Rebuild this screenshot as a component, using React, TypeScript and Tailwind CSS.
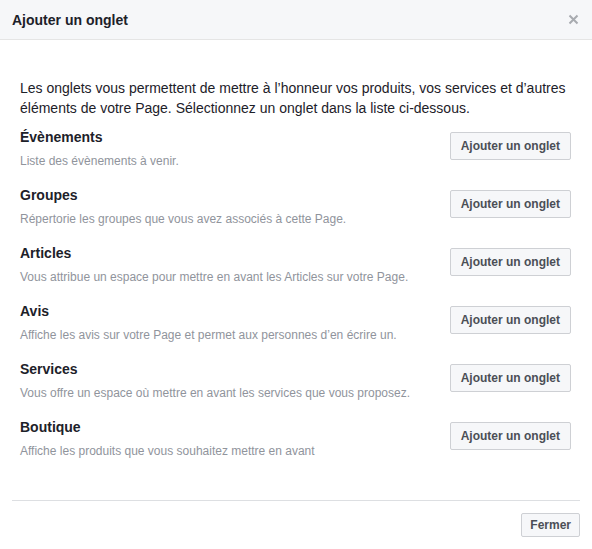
import React from 'react';

const tabs = [
    { title: 'Évènements', desc: 'Liste des évènements à venir.' },
    { title: 'Groupes', desc: 'Répertorie les groupes que vous avez associés à cette Page.' },
    { title: 'Articles', desc: 'Vous attribue un espace pour mettre en avant les Articles sur votre Page.' },
    { title: 'Avis', desc: 'Affiche les avis sur votre Page et permet aux personnes d’en écrire un.' },
    { title: 'Services', desc: 'Vous offre un espace où mettre en avant les services que vous proposez.' },
    { title: 'Boutique', desc: 'Affiche les produits que vous souhaitez mettre en avant' },
];

const App: React.FC = () => {
    return (
        <div className="w-[592px] h-[549px] bg-white flex flex-col font-['Liberation_Sans',Arial,sans-serif] text-[#1d2129]">
            {/* Header */}
            <div className="h-[40px] shrink-0 flex items-center justify-between pl-3 pr-[13px] bg-[#f6f7f9] border-b border-[#e5e5e5]">
                <h3 className="text-[14px] font-bold leading-[18px]">Ajouter un onglet</h3>
                <button className="text-[#a8abb0]">
                    <svg width="11" height="11" viewBox="0 0 11 11">
                        <path d="M1.5 1.5 L9.5 9.5 M9.5 1.5 L1.5 9.5" stroke="currentColor" strokeWidth="2" />
                    </svg>
                </button>
            </div>

            {/* Body */}
            <div className="flex-1 pl-5 pr-[21px] pt-[38px]">
                <p className="text-[14px] leading-[20px] mb-[10px]">
                    Les onglets vous permettent de mettre à l’honneur vos produits, vos services et d’autres éléments de votre Page. Sélectionnez un onglet dans la liste ci-dessous.
                </p>
                <div className="flex flex-col">
                    {tabs.map(t => (
                        <div key={t.title} className="h-[58px] flex items-start justify-between">
                            <div className="flex flex-col gap-[7px]">
                                <span className="text-[14px] font-bold leading-[18px] text-[#1d2129]">{t.title}</span>
                                <span className="text-[12px] leading-[16px] text-[#90949c]">{t.desc}</span>
                            </div>
                            <button className="mt-[4px] h-[28px] px-[10px] text-[12px] font-bold text-[#4b4f56] bg-[#f6f7f9] border border-[#ced0d4] rounded-[2px]">
                                Ajouter un onglet
                            </button>
                        </div>
                    ))}
                </div>
            </div>

            {/* Footer */}
            <div className="mx-3 border-t border-[#dddfe2] pt-3 pb-3 flex justify-end shrink-0">
                <button className="h-[24px] px-[8px] text-[12px] font-bold text-[#4b4f56] bg-[#f6f7f9] border border-[#ced0d4] rounded-[2px]">
                    Fermer
                </button>
            </div>
        </div>
    );
};

export default App;
